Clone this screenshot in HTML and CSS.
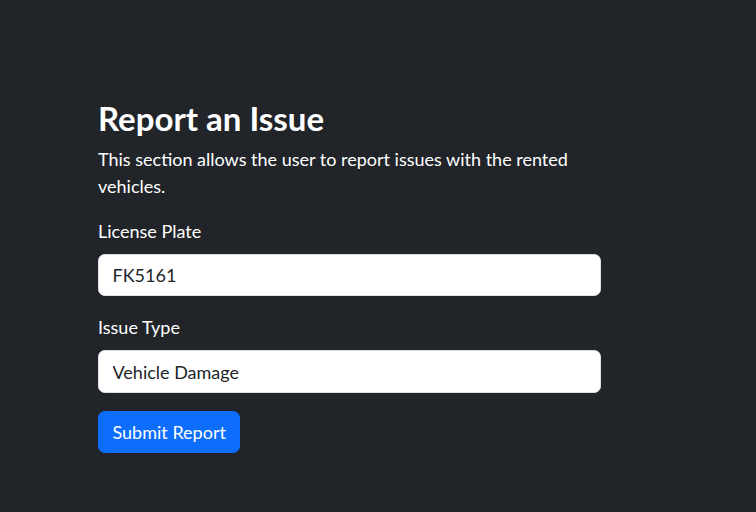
FILE: index.html
```html
<!DOCTYPE html>
<html lang="en">
<head>
<meta charset="utf-8">
<title>Report an Issue</title>
<link rel="stylesheet" href="styles.css">
</head>
<body>
<main class="container">
  <h2 class="title">Report an Issue</h2>
  <p class="lead-text">This section allows the user to report issues with the rented vehicles.</p>
  <form class="form">
    <div class="field">
      <label class="label" for="plate">License Plate</label>
      <input class="input" id="plate" type="text" value="FK5161">
    </div>
    <div class="field">
      <label class="label" for="issue">Issue Type</label>
      <input class="input" id="issue" type="text" value="Vehicle Damage">
    </div>
    <button class="btn" type="button">Submit Report</button>
  </form>
</main>
</body>
</html>
```
FILE: styles.css
```css
html { font-size: 18px; }
body {
  margin: 0;
  background: #212529;
  color: #ffffff;
  font-family: "Lato", "Noto Sans", sans-serif;
  font-size: 1rem;
  line-height: 1.5;
  height: 512px;
}
.container {
  width: 503px;
  margin-left: 98px;
  padding-top: 100px;
}
.title {
  margin: 0 0 9px;
  font-size: 33px;
  font-weight: 700;
  line-height: 36.8px;
}
.lead-text {
  margin: 0 0 18px;
}
.field {
  margin-bottom: 18px;
}
.label {
  display: block;
  margin-bottom: 9px;
}
.input {
  display: block;
  box-sizing: border-box;
  width: 100%;
  height: 42.5px;
  padding: 6.75px 13.5px;
  font: inherit;
  line-height: 1.5;
  color: #212529;
  background: #ffffff;
  border: 1px solid #dee2e6;
  border-radius: 6.75px;
}
.btn {
  display: inline-block;
  padding: 6.75px 13.5px;
  font: inherit;
  line-height: 1.5;
  color: #ffffff;
  background: #0d6efd;
  border: 1px solid #0d6efd;
  border-radius: 6.75px;
}
```
